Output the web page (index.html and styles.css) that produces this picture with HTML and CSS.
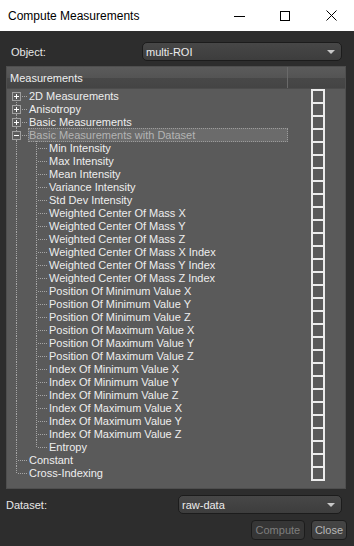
FILE: index.html
```html
<!DOCTYPE html>
<html lang="en">
<head>
    <meta charset="UTF-8">
    <title>Compute Measurements</title>
    <link rel="stylesheet" href="styles.css">
</head>
<body>
<div class="window">
    <div class="titlebar">
        <div class="title">Compute Measurements</div>
        <div class="caption-btn">
            <svg width="11" height="10" viewBox="0 0 11 10"><path d="M0 5.5h11" stroke="#000" stroke-width="1" fill="none"/></svg>
        </div>
        <div class="caption-btn">
            <svg width="10" height="10" viewBox="0 0 10 10"><rect x="0.5" y="0.5" width="9" height="9" stroke="#000" stroke-width="1" fill="none"/></svg>
        </div>
        <div class="caption-btn">
            <svg width="11" height="11" viewBox="0 0 11 11"><path d="M0.5 0.5l10 10M10.5 0.5l-10 10" stroke="#000" stroke-width="1" fill="none"/></svg>
        </div>
    </div>

    <div class="content">
        <div class="field-row object-row">
            <span class="label">Object:</span>
            <div class="combo object-combo"><span>multi-ROI</span><i class="arrow"></i></div>
        </div>

        <div class="tree">
            <div class="tree-header">
                <div class="hcol first">Measurements</div>
                <div class="hcol"></div>
            </div>
            <div class="tree-body">
                <div class="row"><div class="main"><span class="br exp first-top"><b class="box plus"></b></span><span class="txt">2D Measurements</span></div><div class="chk"><span class="cb"></span></div></div>
                <div class="row"><div class="main"><span class="br exp"><b class="box plus"></b></span><span class="txt">Anisotropy</span></div><div class="chk"><span class="cb"></span></div></div>
                <div class="row"><div class="main"><span class="br exp"><b class="box plus"></b></span><span class="txt">Basic Measurements</span></div><div class="chk"><span class="cb"></span></div></div>
                <div class="row"><div class="main"><span class="br exp"><b class="box"></b></span><span class="txt selected">Basic Measurements with Dataset</span></div><div class="chk"><span class="cb"></span></div></div>
                <div class="row"><div class="main"><span class="br line"></span><span class="br tee"></span><span class="txt">Min Intensity</span></div><div class="chk"><span class="cb"></span></div></div>
                <div class="row"><div class="main"><span class="br line"></span><span class="br tee"></span><span class="txt">Max Intensity</span></div><div class="chk"><span class="cb"></span></div></div>
                <div class="row"><div class="main"><span class="br line"></span><span class="br tee"></span><span class="txt">Mean Intensity</span></div><div class="chk"><span class="cb"></span></div></div>
                <div class="row"><div class="main"><span class="br line"></span><span class="br tee"></span><span class="txt">Variance Intensity</span></div><div class="chk"><span class="cb"></span></div></div>
                <div class="row"><div class="main"><span class="br line"></span><span class="br tee"></span><span class="txt">Std Dev Intensity</span></div><div class="chk"><span class="cb"></span></div></div>
                <div class="row"><div class="main"><span class="br line"></span><span class="br tee"></span><span class="txt">Weighted Center Of Mass X</span></div><div class="chk"><span class="cb"></span></div></div>
                <div class="row"><div class="main"><span class="br line"></span><span class="br tee"></span><span class="txt">Weighted Center Of Mass Y</span></div><div class="chk"><span class="cb"></span></div></div>
                <div class="row"><div class="main"><span class="br line"></span><span class="br tee"></span><span class="txt">Weighted Center Of Mass Z</span></div><div class="chk"><span class="cb"></span></div></div>
                <div class="row"><div class="main"><span class="br line"></span><span class="br tee"></span><span class="txt">Weighted Center Of Mass X Index</span></div><div class="chk"><span class="cb"></span></div></div>
                <div class="row"><div class="main"><span class="br line"></span><span class="br tee"></span><span class="txt">Weighted Center Of Mass Y Index</span></div><div class="chk"><span class="cb"></span></div></div>
                <div class="row"><div class="main"><span class="br line"></span><span class="br tee"></span><span class="txt">Weighted Center Of Mass Z Index</span></div><div class="chk"><span class="cb"></span></div></div>
                <div class="row"><div class="main"><span class="br line"></span><span class="br tee"></span><span class="txt">Position Of Minimum Value X</span></div><div class="chk"><span class="cb"></span></div></div>
                <div class="row"><div class="main"><span class="br line"></span><span class="br tee"></span><span class="txt">Position Of Minimum Value Y</span></div><div class="chk"><span class="cb"></span></div></div>
                <div class="row"><div class="main"><span class="br line"></span><span class="br tee"></span><span class="txt">Position Of Minimum Value Z</span></div><div class="chk"><span class="cb"></span></div></div>
                <div class="row"><div class="main"><span class="br line"></span><span class="br tee"></span><span class="txt">Position Of Maximum Value X</span></div><div class="chk"><span class="cb"></span></div></div>
                <div class="row"><div class="main"><span class="br line"></span><span class="br tee"></span><span class="txt">Position Of Maximum Value Y</span></div><div class="chk"><span class="cb"></span></div></div>
                <div class="row"><div class="main"><span class="br line"></span><span class="br tee"></span><span class="txt">Position Of Maximum Value Z</span></div><div class="chk"><span class="cb"></span></div></div>
                <div class="row"><div class="main"><span class="br line"></span><span class="br tee"></span><span class="txt">Index Of Minimum Value X</span></div><div class="chk"><span class="cb"></span></div></div>
                <div class="row"><div class="main"><span class="br line"></span><span class="br tee"></span><span class="txt">Index Of Minimum Value Y</span></div><div class="chk"><span class="cb"></span></div></div>
                <div class="row"><div class="main"><span class="br line"></span><span class="br tee"></span><span class="txt">Index Of Minimum Value Z</span></div><div class="chk"><span class="cb"></span></div></div>
                <div class="row"><div class="main"><span class="br line"></span><span class="br tee"></span><span class="txt">Index Of Maximum Value X</span></div><div class="chk"><span class="cb"></span></div></div>
                <div class="row"><div class="main"><span class="br line"></span><span class="br tee"></span><span class="txt">Index Of Maximum Value Y</span></div><div class="chk"><span class="cb"></span></div></div>
                <div class="row"><div class="main"><span class="br line"></span><span class="br tee"></span><span class="txt">Index Of Maximum Value Z</span></div><div class="chk"><span class="cb"></span></div></div>
                <div class="row"><div class="main"><span class="br line"></span><span class="br last"></span><span class="txt">Entropy</span></div><div class="chk"><span class="cb"></span></div></div>
                <div class="row"><div class="main"><span class="br tee"></span><span class="txt">Constant</span></div><div class="chk"><span class="cb"></span></div></div>
                <div class="row"><div class="main"><span class="br last"></span><span class="txt">Cross-Indexing</span></div><div class="chk"><span class="cb bottom"></span></div></div>
            </div>
        </div>

        <div class="field-row dataset-row">
            <span class="label">Dataset:</span>
            <div class="combo dataset-combo"><span>raw-data</span><i class="arrow"></i></div>
        </div>

        <div class="buttons">
            <button class="btn disabled">Compute</button>
            <button class="btn">Close</button>
        </div>
    </div>
</div>
</body>
</html>
```
FILE: styles.css
```css
* {
    box-sizing: border-box;
}
body {
    margin: 0;
    background-color: #2d2d2d;
    font-family: "Liberation Sans", Arial, sans-serif;
    font-size: 11px;
}
.window {
    width: 354px;
    height: 546px;
    display: flex;
    flex-direction: column;
    background-color: #2d2d2d;
}
.titlebar {
    height: 31px;
    background-color: #ffffff;
    display: flex;
    align-items: center;
}
.title {
    flex: 1;
    padding-left: 8px;
    font-size: 12px;
    color: #000000;
}
.caption-btn {
    width: 46px;
    height: 31px;
    display: flex;
    align-items: center;
    justify-content: center;
}
.content {
    flex: 1;
    color: #e8e8e8;
}
.field-row {
    display: flex;
    align-items: center;
    justify-content: space-between;
    height: 19px;
}
.object-row {
    margin: 11px 12px 0 11px;
}
.dataset-row {
    margin: 6px 12px 0 6px;
}
.combo {
    height: 19px;
    border: 1px solid #1c1c1c;
    border-radius: 5px;
    background: linear-gradient(#474747, #3d3d3d);
    display: flex;
    align-items: center;
    padding-left: 3px;
    color: #ececec;
}
.combo span {
    flex: 1;
}
.object-combo {
    width: 200px;
}
.dataset-combo {
    width: 164px;
}
.arrow {
    width: 0;
    height: 0;
    border-left: 4px solid transparent;
    border-right: 4px solid transparent;
    border-top: 4px solid #c8c8c8;
    margin-right: 6px;
}
.tree {
    margin: 5px 8px 0 6px;
    border: 1px solid #4e4e4e;
    background-color: #5a5a5a;
}
.tree-header {
    display: flex;
    height: 22px;
    border-bottom: 1px solid #4c4c4c;
    background: linear-gradient(#5b5b5b, #545454 50%, #484848 52%, #444444);
}
.hcol {
    flex: 1;
    display: flex;
    align-items: center;
    padding-left: 3px;
    color: #f0f0f0;
}
.hcol.first {
    flex: 0 0 281px;
    border-right: 1px solid #6a6a6a;
}
.tree-body {
    padding-bottom: 9px;
}
.row {
    display: grid;
    grid-template-columns: 281px 1fr;
    height: 13px;
    line-height: 14px;
}
.main {
    display: flex;
}
.txt {
    padding: 0 2px;
    white-space: nowrap;
    color: #eeeeee;
}
.txt.selected {
    flex: 1;
    margin-left: 1px;
    padding-left: 1px;
    background-color: #6b6b6b;
    outline: 1px dotted #9c9c9c;
    outline-offset: -1px;
    color: #b4b4b4;
}

/* branch lines */
.br {
    flex: 0 0 20px;
    height: 13px;
    position: relative;
}
.br::before,
.br::after {
    content: "";
    position: absolute;
}
.br.line::before,
.br.tee::before,
.br.exp::before {
    left: 9px;
    top: 0;
    width: 1px;
    height: 13px;
    background: repeating-linear-gradient(to bottom, #a6a6a6 0 1px, transparent 1px 2px);
}
.br.exp.first-top::before {
    top: 7px;
    height: 6px;
}
.br.last::before {
    left: 9px;
    top: 0;
    width: 1px;
    height: 8px;
    background: repeating-linear-gradient(to bottom, #a6a6a6 0 1px, transparent 1px 2px);
}
.br.tee::after,
.br.last::after {
    left: 10px;
    top: 7px;
    width: 10px;
    height: 1px;
    background: repeating-linear-gradient(to right, transparent 0 1px, #a6a6a6 1px 2px);
}
.br.exp::after {
    left: 14px;
    top: 7px;
    width: 6px;
    height: 1px;
    background: repeating-linear-gradient(to right, transparent 0 1px, #a6a6a6 1px 2px);
}
.box {
    position: absolute;
    left: 5px;
    top: 3px;
    width: 9px;
    height: 9px;
    border: 1px solid #a0a0a0;
    background-color: #5c5c5c;
    z-index: 1;
}
.box::before,
.box.plus::after {
    content: "";
    position: absolute;
    background-color: #ffffff;
}
.box::before {
    left: 1px;
    top: 3px;
    width: 5px;
    height: 1px;
}
.box.plus::after {
    left: 3px;
    top: 1px;
    width: 1px;
    height: 5px;
}

/* check column */
.chk {
    padding-left: 23px;
}
.cb {
    display: block;
    width: 14px;
    height: 13px;
    border: 2px solid #ececec;
    border-bottom: none;
}
.cb.bottom {
    height: 15px;
    border-bottom: 2px solid #ececec;
}
.buttons {
    display: flex;
    justify-content: flex-end;
    gap: 6px;
    margin: 6px 7px 0 0;
}
.btn {
    height: 20px;
    font-family: "Liberation Sans", Arial, sans-serif;
    font-size: 11px;
    border: 1px solid #1c1c1c;
    border-radius: 4px;
    background: linear-gradient(#454545, #3e3e3e);
    color: #b8b8b8;
    padding: 0 3px;
}
.btn.disabled {
    width: 54px;
    background: #363636;
    color: #7e7e7e;
}
```
